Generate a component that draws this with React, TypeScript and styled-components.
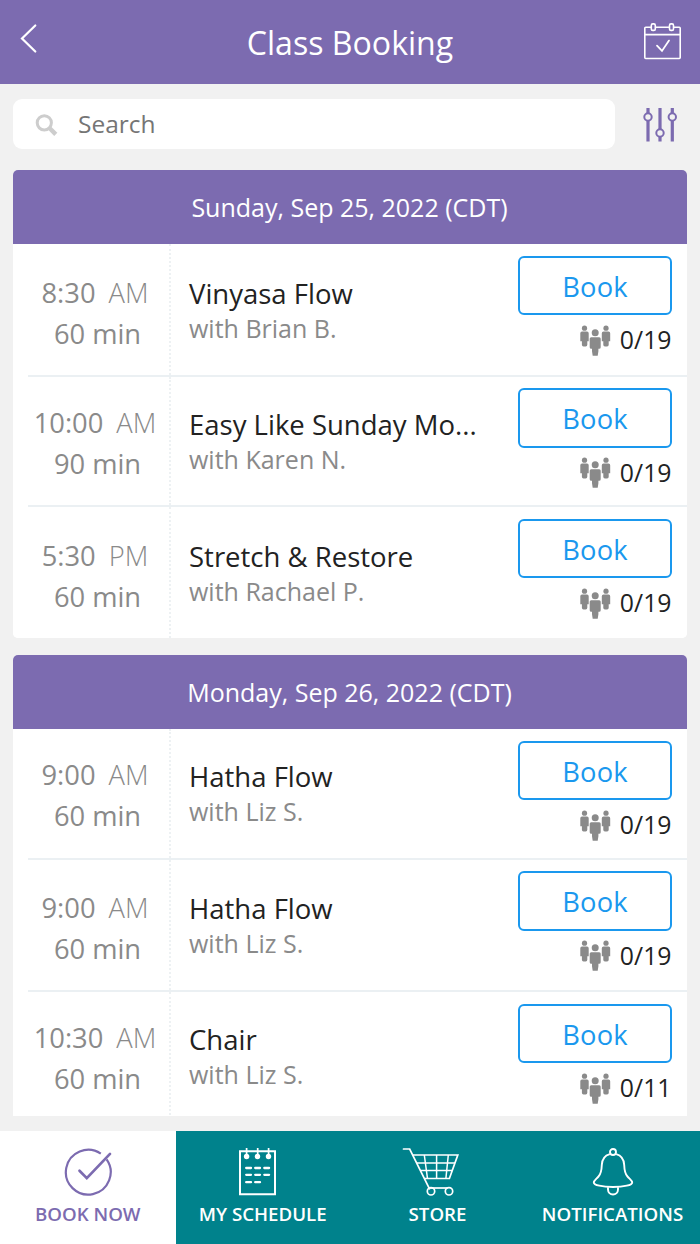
import React from "react";
import styled, { createGlobalStyle } from "styled-components";

const purple = "#7c6bb0";
const teal = "#00828c";
const blue = "#1a98ee";

const GlobalStyle = createGlobalStyle`
  * { box-sizing: border-box; }
  body { margin: 0; background: #f1f1f1; }
`;

const Screen = styled.div`
  width: 700px;
  height: 1244px;
  display: flex;
  flex-direction: column;
  overflow: hidden;
  background: #f1f1f1;
  font-family: "Open Sans", "Noto Sans", sans-serif;
  color: #222;
`;

const TopBar = styled.header`
  flex: none;
  height: 84px;
  display: grid;
  grid-template-columns: 60px 1fr 60px;
  background: ${purple};
  color: #fff;
`;

const Title = styled.h1`
  margin: 0;
  padding-top: 1px;
  font-size: 32.1px;
  font-weight: 400;
  line-height: 84px;
  text-align: center;
`;

const BackButton = styled.div`
  padding: 22px 0 0 18px;
`;

const CalendarButton = styled.div`
  padding: 20px 0 0 1px;
`;

const SearchRow = styled.div`
  flex: none;
  height: 86px;
  display: flex;
  padding: 15px 0 0 13px;
`;

const SearchBox = styled.div`
  width: 602px;
  height: 50px;
  display: flex;
  align-items: center;
  padding-left: 21px;
  gap: 20px;
  border-radius: 9px;
  background: #fff;
  color: #757575;
  font-size: 24.5px;
  line-height: 50px;
`;

const FilterButton = styled.div`
  padding: 6px 0 0 26px;
`;

const Schedule = styled.main`
  flex: none;
  height: 946px;
  overflow: hidden;
  display: flex;
  flex-direction: column;
  gap: 17px;
  padding: 0 13px;
`;

const DayCard = styled.section`
  flex: none;
  width: 674px;
  overflow: hidden;
  border-radius: 5px;
  background: #fff;
`;

const DayHeader = styled.h2`
  margin: 0;
  height: 74px;
  padding-right: 1px;
  background: ${purple};
  color: #fff;
  font-size: 25px;
  font-weight: 400;
  line-height: 75px;
  text-align: center;
`;

const ClassRow = styled.div<{ $height: number }>`
  height: ${(p) => p.$height}px;
  display: flex;
  padding-left: 15px;
  background: #fff;
`;

const RowBody = styled.div<{ $last: boolean }>`
  flex: 1;
  min-width: 0;
  display: flex;
  border-bottom: ${(p) => (p.$last ? "0" : "2px solid #ebf0f3")};
`;

const TimeColumn = styled.div<{ $top: number }>`
  flex: none;
  width: 143px;
  padding-top: ${(p) => p.$top}px;
  padding-right: 2px;
  border-right: 2px dotted #edf1f3;
  color: #8a8a8a;
  font-size: 27.3px;
  line-height: 41px;
  text-align: center;
`;

const TimeLine = styled.div`
  display: flex;
  justify-content: center;
  gap: 13px;
  margin-left: -5px;
`;

const Meridiem = styled.span`
  font-weight: 300;
`;

const ClassColumn = styled.div<{ $top: number }>`
  flex: none;
  width: 334px;
  padding: ${(p) => p.$top}px 0 0 18px;
`;

const ClassName = styled.div`
  font-size: 27.5px;
  line-height: 35px;
  white-space: nowrap;
`;

const Teacher = styled.div`
  color: #8a8a8a;
  font-size: 25px;
  line-height: 35px;
`;

const ActionColumn = styled.div<{ $top: number }>`
  flex: none;
  width: 182px;
  padding: ${(p) => p.$top}px 15px 0 13px;
`;

const BookButton = styled.button`
  display: block;
  width: 154px;
  height: 59.5px;
  padding: 1px 0 0;
  border: 2px solid ${blue};
  border-radius: 6px;
  background: #fff;
  color: ${blue};
  font: 400 27.3px/55px "Open Sans", "Noto Sans", sans-serif;
  letter-spacing: 0.2px;
`;

const Spots = styled.div`
  display: flex;
  justify-content: flex-end;
  gap: 9px;
  height: 48px;
  padding-right: 0.5px;
  font-size: 24.8px;
  line-height: 48px;

  svg { margin-top: 9.5px; }
`;

const TabBar = styled.nav`
  flex: none;
  height: 113px;
  margin-top: 15px;
  display: grid;
  grid-template-columns: 175.5px 174.5px 175px 175px;
  background: ${teal};
`;

const Tab = styled.div<{ $active?: boolean }>`
  display: flex;
  flex-direction: column;
  align-items: center;
  padding-top: 14px;
  background: ${(p) => (p.$active ? "#fff" : teal)};
  color: ${(p) => (p.$active ? purple : "#fff")};
`;

const TabIcon = styled.div<{ $nudge?: number }>`
  height: 52px;
  margin-right: ${(p) => p.$nudge ?? 0}px;

  svg { display: block; }
`;

const TabLabel = styled.div`
  margin-top: 5px;
  font-size: 18.7px;
  font-weight: 600;
  line-height: 24px;
  white-space: nowrap;
`;

function BackIcon() {
  return (
    <svg width="24" height="34" viewBox="0 0 24 34" fill="none" stroke="#fff" strokeWidth="2.2" strokeLinecap="round">
      <path d="M17.3 3.5 4 16.5l13.3 13" />
    </svg>
  );
}

function CalendarIcon() {
  return (
    <svg width="42" height="42" viewBox="0 0 42 42" fill="none" stroke="#fff" strokeWidth="1.6">
      <path d="M10.300 7.300H4.700a.9.9 0 0 0-.9.9v29.400c0 .5.4.9.9.9h33.600c.5 0 .9-.4.9-.9V8.200c0-.5-.4-.9-.9-.9h-5.600M14.300 7.300h14.400M3.800 14.600h35.400" />
      <rect x="10.300" y="3.900" width="4" height="6.500" rx="1.500" />
      <rect x="28.500" y="3.900" width="4" height="6.500" rx="1.500" />
      <path d="m16 25.700 5 5.200 7-10.300" strokeLinecap="round" strokeWidth="1.800" />
    </svg>
  );
}

function SearchIcon() {
  return (
    <svg width="24" height="24" viewBox="0 0 24 24" fill="none" stroke="#cdcdcd">
      <circle cx="10.300" cy="10.800" r="7.100" strokeWidth="3" />
      <path d="m15.200 15.800 6.600 6.600" strokeWidth="4.400" />
    </svg>
  );
}

function FilterIcon() {
  return (
    <svg width="38" height="40" viewBox="0 0 38 40" fill="none" stroke={purple}>
      <g strokeWidth="3.200">
        <path d="M7 3v5M7 16v20.500M19 3v21M19 32v4.500M31.300 3v5M31.300 16v20.500" />
      </g>
      <g strokeWidth="2">
        <circle cx="7" cy="12" r="3.700" />
        <circle cx="19" cy="28" r="3.700" />
        <circle cx="31.300" cy="12" r="3.700" />
      </g>
    </svg>
  );
}

function PeopleIcon() {
  return (
    <svg width="32" height="32" viewBox="0 0 32 32" fill="#8a8a8a">
      <circle cx="5.500" cy="3.200" r="2.600" />
      <path d="M3 6.600h5q1.700 0 1.700 1.700v7.900H8.300v3.500q0 1.800-1.600 1.800H4.500q-1.600 0-1.600-1.800v-3.500H1.300V8.300q0-1.700 1.700-1.700z" />
      <circle cx="27" cy="3.200" r="2.600" />
      <path d="M24.500 6.600h5q1.700 0 1.700 1.700v7.900h-1.500v3.500q0 1.800-1.600 1.800h-2.200q-1.600 0-1.600-1.800v-3.500h-1.500V8.300q0-1.700 1.700-1.700z" />
      <circle cx="16.200" cy="7.800" r="3.500" />
      <path d="M12.200 12.200h8q1.500 0 1.500 1.500v8.500q0 1.600-1.600 1.600h-.7v2.400l-.7 4.600h-5l-.7-4.600v-2.400h-.7q-1.600 0-1.600-1.600v-8.500q0-1.500 1.500-1.500z" />
    </svg>
  );
}

function BookNowIcon() {
  return (
    <svg width="52" height="52" viewBox="0 0 52 52" fill="none" stroke={purple} strokeWidth="2.200">
      <path d="M38.800 8.600A22.400 22.400 0 1 0 44.600 14.300" />
      <path d="m17.500 25.800 7.300 7.300 23.200-24.200" strokeWidth="2.700" strokeLinecap="round" />
    </svg>
  );
}

function ScheduleIcon() {
  return (
    <svg width="42" height="52" viewBox="0 0 42 52" fill="none" stroke="#fff" strokeWidth="2">
      <path d="M3 6.300h35v43H3z" />
      <path d="M9.600 3v7M20.700 3v7M31.600 3v7" strokeWidth="1.700" />
      <g fill="#fff" stroke="none">
        <circle cx="9.600" cy="11.500" r="2.700" />
        <circle cx="20.500" cy="11.500" r="2.700" />
        <circle cx="31.500" cy="11.500" r="2.700" />
      </g>
      <path
        strokeWidth="2.300"
        strokeLinecap="round"
        d="M9.200 23h4.800M18.200 23h4.800M27.300 23h4.800M9.200 29.800h4.800M18.200 29.800h4.800M27.300 29.800h4.800M9.200 37.200h4.800M18.200 37.200h4.800"
      />
    </svg>
  );
}

function CartIcon() {
  return (
    <svg width="60" height="52" viewBox="0 0 60 52" fill="none" stroke="#fff" strokeWidth="1.700">
      <path d="M1.500 4h6.200l19.800 39.800" strokeLinecap="round" />
      <path d="M10.500 10H55.800L47.400 33.500H22.200" />
      <path d="M15 18h38M18.500 25.500h31.800M22.300 10l3.200 23.500M34.600 10v23.500M46.300 10l-2.400 23.500" strokeWidth="1.500" />
      <circle cx="29" cy="46.300" r="3.700" />
      <circle cx="47" cy="46.300" r="3.700" />
      <path d="M27 43h18.500" />
    </svg>
  );
}

function BellIcon() {
  return (
    <svg width="44" height="52" viewBox="0 0 44 52" fill="none" stroke="#fff" strokeWidth="1.900">
      <circle cx="22" cy="7" r="3" />
      <path d="M18.800 9.200C13 10.800 11 15 10.800 20c-.2 6-1 9-3.300 11.500-2.500 2.700-4.700 4-4.700 5.900C2.800 40 11 42 22 42s19.200-2 19.200-4.600c0-1.900-2.200-3.200-4.700-5.900C34.200 29 33.400 26 33.200 20 33 15 31 10.800 25.200 9.200" />
      <path d="M17 42.300v2.200a5 5 0 0 0 10 0v-2.200" />
    </svg>
  );
}

interface YogaClass {
  time: string;
  meridiem: string;
  minutes: number;
  name: string;
  teacher: string;
  spots: string;
  height: number;
  timeTop: number;
  nameTop: number;
  actionTop: number;
}

const days: { date: string; classes: YogaClass[] }[] = [
  {
    date: "Sunday, Sep 25, 2022 (CDT)",
    classes: [
      { time: "8:30", meridiem: "AM", minutes: 60, name: "Vinyasa Flow", teacher: "Brian B.", spots: "0/19", height: 133, timeTop: 28, nameTop: 32, actionTop: 11.5 },
      { time: "10:00", meridiem: "AM", minutes: 90, name: "Easy Like Sunday Mo...", teacher: "Karen N.", spots: "0/19", height: 130, timeTop: 25, nameTop: 30, actionTop: 11 },
      { time: "5:30", meridiem: "PM", minutes: 60, name: "Stretch & Restore", teacher: "Rachael P.", spots: "0/19", height: 131, timeTop: 28, nameTop: 32, actionTop: 11.5 },
    ],
  },
  {
    date: "Monday, Sep 26, 2022 (CDT)",
    classes: [
      { time: "9:00", meridiem: "AM", minutes: 60, name: "Hatha Flow", teacher: "Liz S.", spots: "0/19", height: 131, timeTop: 25, nameTop: 30, actionTop: 11.5 },
      { time: "9:00", meridiem: "AM", minutes: 60, name: "Hatha Flow", teacher: "Liz S.", spots: "0/19", height: 132, timeTop: 27, nameTop: 31, actionTop: 11 },
      { time: "10:30", meridiem: "AM", minutes: 60, name: "Chair", teacher: "Liz S.", spots: "0/11", height: 131, timeTop: 25, nameTop: 30, actionTop: 11.5 },
    ],
  },
];

export default function App() {
  return (
    <Screen>
      <GlobalStyle />
      <TopBar>
        <BackButton><BackIcon /></BackButton>
        <Title>Class Booking</Title>
        <CalendarButton><CalendarIcon /></CalendarButton>
      </TopBar>
      <SearchRow>
        <SearchBox>
          <SearchIcon />
          <span>Search</span>
        </SearchBox>
        <FilterButton><FilterIcon /></FilterButton>
      </SearchRow>
      <Schedule>
        {days.map((day) => (
          <DayCard key={day.date}>
            <DayHeader>{day.date}</DayHeader>
            {day.classes.map((c, i) => (
              <ClassRow key={i} $height={c.height}>
                <RowBody $last={i === day.classes.length - 1}>
                  <TimeColumn $top={c.timeTop}>
                    <TimeLine>
                      <span>{c.time}</span>
                      <Meridiem>{c.meridiem}</Meridiem>
                    </TimeLine>
                    <div>{c.minutes} min</div>
                  </TimeColumn>
                  <ClassColumn $top={c.nameTop}>
                    <ClassName>{c.name}</ClassName>
                    <Teacher>with {c.teacher}</Teacher>
                  </ClassColumn>
                  <ActionColumn $top={c.actionTop}>
                    <BookButton>Book</BookButton>
                    <Spots>
                      <PeopleIcon />
                      <span>{c.spots}</span>
                    </Spots>
                  </ActionColumn>
                </RowBody>
              </ClassRow>
            ))}
          </DayCard>
        ))}
      </Schedule>
      <TabBar>
        <Tab $active>
          <TabIcon><BookNowIcon /></TabIcon>
          <TabLabel>BOOK NOW</TabLabel>
        </Tab>
        <Tab>
          <TabIcon $nudge={10}><ScheduleIcon /></TabIcon>
          <TabLabel>MY SCHEDULE</TabLabel>
        </Tab>
        <Tab>
          <TabIcon $nudge={11}><CartIcon /></TabIcon>
          <TabLabel>STORE</TabLabel>
        </Tab>
        <Tab>
          <TabIcon><BellIcon /></TabIcon>
          <TabLabel>NOTIFICATIONS</TabLabel>
        </Tab>
      </TabBar>
    </Screen>
  );
}
